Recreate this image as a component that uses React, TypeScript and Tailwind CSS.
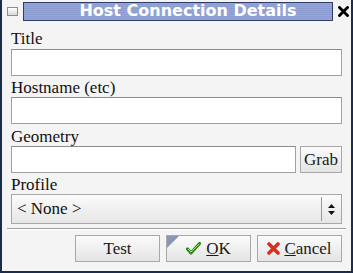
import React from "react";

const SERIF = "font-['Liberation_Serif','DejaVu_Serif',serif]";

function Btn({ children, className = "", focus = false }: { children: React.ReactNode; className?: string; focus?: boolean }) {
  return (
    <div
      className={
        "relative flex items-center justify-center border border-[#a8a8a8] bg-[linear-gradient(#fbfbfb,#e4e4e4)] text-[17px] text-[#1a1a1a] " +
        SERIF +
        " " +
        className
      }
    >
      {focus && (
        <svg width="12" height="12" viewBox="0 0 12 12" className="absolute left-0 top-0">
          <path d="M0 0 L12 0 L0 12 Z" fill="#8a96b4" />
        </svg>
      )}
      {children}
    </div>
  );
}

function Input({ className = "" }: { className?: string }) {
  return <div className={"h-[27px] border border-[#a0a0a0] border-t-[#8c8c8c] bg-white " + className} />;
}

function Label({ children, className = "" }: { children: React.ReactNode; className?: string }) {
  return (
    <div className={"font-['Liberation_Serif','DejaVu_Serif',serif] text-[17px] text-[#111] " + className}>{children}</div>
  );
}

export default function App() {
  return (
    <div className="w-[353px] h-[273px] bg-[#1c2c4c] pl-[2px] pr-[2px] pb-[2px] font-['Liberation_Serif','DejaVu_Serif',serif]">
      <div className="flex h-full flex-col bg-[#f4f4f4]">
        {/* title bar */}
        <div className="flex h-[22px] items-center">
          <div className="ml-[5px] h-[9px] w-[11px] border border-[#8c8c8c] bg-[linear-gradient(#ffffff,#d8d8d8)]" />
          <div className="ml-[5px] flex h-[19px] w-[310px] items-center justify-center border border-[#2e3c6a] bg-[repeating-linear-gradient(#97a6d8_0px,#97a6d8_1px,#8b9bd0_1px,#8b9bd0_2px)] pl-[20px] font-['DejaVu_Sans',Verdana,sans-serif] text-[16px] font-bold text-white">
            Host Connection Details
          </div>
          <div className="ml-[3px] flex w-[14px] items-center justify-center">
            <svg width="11" height="11" viewBox="0 0 11 11">
              <path d="M1.5 1.5 L9.5 9.5 M9.5 1.5 L1.5 9.5" stroke="#000" strokeWidth="2.8" strokeLinecap="square" />
            </svg>
          </div>
        </div>

        <div className="flex flex-col px-[9px]">
          <Label className="mt-[6px] h-[21px] leading-[21px]">Title</Label>
          <Input />
          <Label className="mt-[3px] h-[18px] leading-[18px]">Hostname (etc)</Label>
          <Input />
          <Label className="mt-[3px] h-[19px] leading-[19px]">Geometry</Label>
          <div className="flex gap-[4px]">
            <Input className="flex-1" />
            <Btn className="h-[27px] w-[42px]">Grab</Btn>
          </div>
          <Label className="mt-[3px] h-[18px] leading-[18px]">Profile</Label>
          <div className="flex h-[30px] border border-[#a8a8a8] bg-[linear-gradient(#fbfbfb,#e6e6e6)]">
            <Label className="flex flex-1 items-center pl-[5px]">&lt; None &gt;</Label>
            <div className="my-[2px] w-px bg-[#9a9a9a]" />
            <div className="flex w-[19px] flex-col items-center justify-center gap-[3px]">
              <svg width="7" height="4" viewBox="0 0 7 4"><path d="M3.5 0 L7 4 L0 4 Z" fill="#111" /></svg>
              <svg width="7" height="4" viewBox="0 0 7 4"><path d="M0 0 L7 0 L3.5 4 Z" fill="#111" /></svg>
            </div>
          </div>
        </div>

        <div className="mx-[5px] mt-[4px] h-[2px] border-t border-[#a0a0a0] border-b border-b-white" />

        <div className="mt-[5px] flex justify-end gap-[6px] pr-[9px]">
          <Btn className="h-[27px] w-[85px]">Test</Btn>
          <Btn className="h-[27px] w-[85px]" focus>
            <svg width="15" height="13" viewBox="0 0 15 13" className="mr-[5px]">
              <path d="M1.5 7 L5 11 L13.5 1.5" stroke="#2f8a1e" strokeWidth="3.2" fill="none" strokeLinejoin="round" strokeLinecap="round" />
              <path d="M2 7 L5 10 L13 2" stroke="#9bdc74" strokeWidth="1" fill="none" />
            </svg>
            <span><span className="underline">O</span>K</span>
          </Btn>
          <Btn className="h-[27px] w-[85px]">
            <svg width="13" height="13" viewBox="0 0 13 13" className="mr-[4px]">
              <path d="M2 2 L11 11 M11 2 L2 11" stroke="#d8301c" strokeWidth="3.6" strokeLinecap="round" />
            </svg>
            <span><span className="underline">C</span>ancel</span>
          </Btn>
        </div>
      </div>
    </div>
  );
}
